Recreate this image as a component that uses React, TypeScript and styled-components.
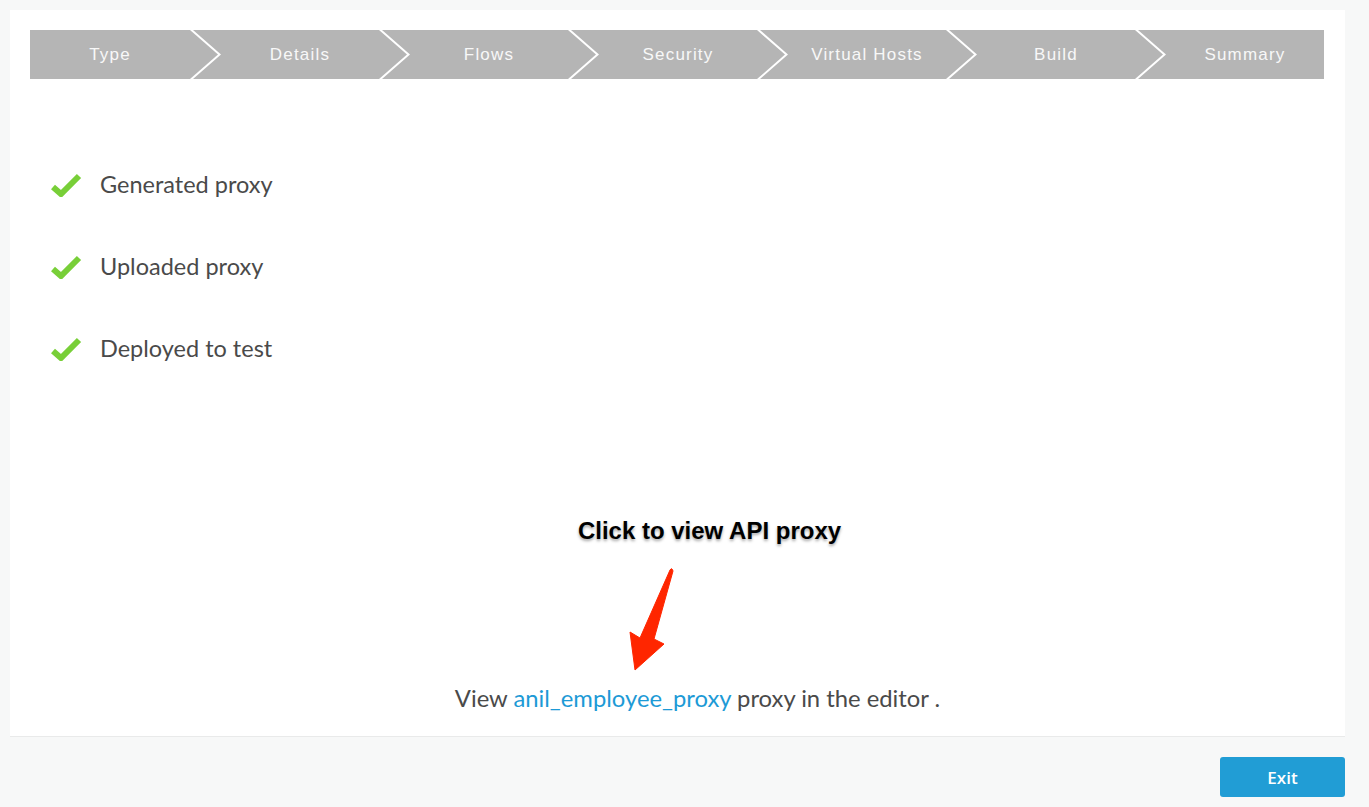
import React from "react";
import styled, { createGlobalStyle } from "styled-components";

const Global = createGlobalStyle`
  html, body { margin: 0; padding: 0; background: #f7f8f8; }
  body { font-family: Lato, "Open Sans", sans-serif; }
`;

const Page = styled.div`
  width: 1369px;
  height: 807px;
  box-sizing: border-box;
  padding: 10px 24px 0 10px;
  display: flex;
  flex-direction: column;
`;

const Card = styled.div`
  background: #ffffff;
  border-bottom: 1px solid #e9eaea;
  padding: 20px 20px 0 20px;
  height: 727px;
  box-sizing: border-box;
  display: flex;
  flex-direction: column;
`;

const Steps = styled.div`
  display: flex;
  height: 49px;
`;

type Pos = "first" | "middle" | "last";

const clipFor = (pos: Pos) => {
  if (pos === "first")
    return "polygon(0 0, calc(100% - 28px) 0, 100% 50%, calc(100% - 28px) 100%, 0 100%)";
  if (pos === "last")
    return "polygon(0 0, 100% 0, 100% 100%, 0 100%, 28px 50%)";
  return "polygon(0 0, calc(100% - 28px) 0, 100% 50%, calc(100% - 28px) 100%, 0 100%, 28px 50%)";
};

const Step = styled.div<{ $pos: Pos }>`
  flex: none;
  width: ${(p) => (p.$pos === "first" ? 188 : p.$pos === "last" ? 186 : 214)}px;
  margin-left: ${(p) => (p.$pos === "first" ? 0 : -25)}px;
  padding-left: ${(p) => (p.$pos === "first" ? 0 : 28)}px;
  padding-right: ${(p) => (p.$pos === "last" ? 0 : 28)}px;
  box-sizing: border-box;
  background: #b5b5b5;
  clip-path: ${(p) => clipFor(p.$pos)};
  display: flex;
  align-items: center;
  justify-content: center;
  color: #f8f8f8;
  font-family: "Liberation Sans", Arial, sans-serif;
  font-size: 17px;
  letter-spacing: 1.2px;
`;

const Checklist = styled.ul`
  list-style: none;
  margin: 93px 0 0 0;
  padding: 0;
  display: flex;
  flex-direction: column;
  gap: 58px;
`;

const CheckRow = styled.li`
  display: flex;
  align-items: center;
  height: 24px;
  gap: 18px;
  padding-left: 20px;
  font-family: Lato, sans-serif;
  font-size: 23.5px;
  color: #4a4a4a;
`;

const CheckIcon = () => (
  <svg width="32" height="26" viewBox="0 0 32 26">
    <polyline
      points="3,16 11,23 29,5"
      fill="none"
      stroke="#78cf38"
      strokeWidth="6"
      strokeLinejoin="miter"
    />
  </svg>
);

const Bottom = styled.div`
  margin-top: auto;
  display: flex;
  flex-direction: column;
  align-items: center;
  padding-left: 40px;
  padding-bottom: 26px;
`;

const Callout = styled.div`
  font-family: "Liberation Sans", Arial, sans-serif;
  font-weight: 700;
  font-size: 24px;
  line-height: 28px;
  color: #000;
  margin-left: 24px;
  text-shadow: 0 2px 3px rgba(0, 0, 0, 0.35), 0 0 2px #fff;
`;

const ArrowWrap = styled.div`
  margin-top: 14px;
  margin-left: -98px;
  height: 120px;
`;

const Arrow = () => (
  <svg width="75" height="120" viewBox="0 0 75 120">
    <path
      d="M59 11 L29 79 L19 73 L24 111 L53 85 L43 80 L62 12 Q61 8 59 11 Z"
      fill="#ff2600"
      stroke="#ff2600"
      strokeWidth="1"
      strokeLinejoin="round"
    />
  </svg>
);

const ViewLine = styled.div`
  margin-top: 7px;
  font-family: Lato, sans-serif;
  font-size: 23.8px;
  line-height: 24px;
  color: #4a4a4a;
`;

const Link = styled.a`
  color: #1d9ad6;
  text-decoration: none;
`;

const Footer = styled.div`
  display: flex;
  justify-content: flex-end;
  padding-top: 20px;
`;

const ExitButton = styled.button`
  width: 125px;
  height: 40px;
  border: none;
  border-radius: 3px;
  background: #219dd5;
  color: #fff;
  font-family: "Open Sans", sans-serif;
  font-weight: 600;
  font-size: 17px;
  cursor: pointer;
`;

const steps = ["Type", "Details", "Flows", "Security", "Virtual Hosts", "Build", "Summary"];
const checks = ["Generated proxy", "Uploaded proxy", "Deployed to test"];

export default function App() {
  return (
    <>
      <Global />
      <Page>
        <Card>
          <Steps>
            {steps.map((s, i) => (
              <Step key={s} $pos={i === 0 ? "first" : i === steps.length - 1 ? "last" : "middle"}>
                {s}
              </Step>
            ))}
          </Steps>
          <Checklist>
            {checks.map((c) => (
              <CheckRow key={c}>
                <CheckIcon />
                <span>{c}</span>
              </CheckRow>
            ))}
          </Checklist>
          <Bottom>
            <Callout>Click to view API proxy</Callout>
            <ArrowWrap>
              <Arrow />
            </ArrowWrap>
            <ViewLine>
              View <Link href="#">anil_employee_proxy</Link> proxy in the editor .
            </ViewLine>
          </Bottom>
        </Card>
        <Footer>
          <ExitButton>Exit</ExitButton>
        </Footer>
      </Page>
    </>
  );
}
